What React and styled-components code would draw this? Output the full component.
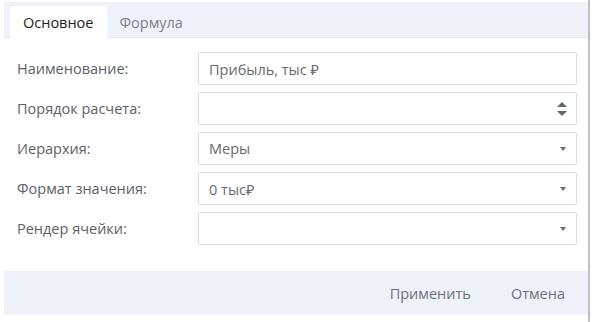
import React from "react";
import styled, { createGlobalStyle } from "styled-components";

const Global = createGlobalStyle`
  html, body { margin: 0; padding: 0; background: #fff; }
  body { font-family: "Open Sans", "Noto Sans", sans-serif; }
  * { box-sizing: border-box; }
`;

const Frame = styled.div`
  width: 590px;
  height: 322px;
  padding: 2px 0 0 4px;
  border-right: 2px solid #bfc0c3;
`;

const Panel = styled.div`
  display: flex;
  flex-direction: column;
  width: 584px;
`;

const TabBar = styled.div`
  display: flex;
  align-items: flex-end;
  height: 36px;
  padding-left: 6px;
  background: #eff2fa;
  border-bottom: 1px solid #e2e5ec;
`;

const Tab = styled.div`
  display: flex;
  align-items: center;
  padding: 0 13px;
  font-size: 14.5px;
  color: ${(p) => (p.$active ? "#222" : "#7a7f8a")};
  background: ${(p) => (p.$active ? "#fff" : "transparent")};
  margin-bottom: -1px;
  height: ${(p) => (p.$active ? "32px" : "31px")};
  border-radius: 2px 2px 0 0;
`;

const Form = styled.div`
  display: flex;
  flex-direction: column;
  gap: 7px;
  padding: 14px 11px 26px 13px;
`;

const Row = styled.div`
  display: grid;
  grid-template-columns: 181px 1fr;
  align-items: center;
`;

const Label = styled.div`
  font-size: 14.5px;
  color: #5d6069;
`;

const Field = styled.div`
  position: relative;
  display: flex;
  align-items: center;
  height: 33px;
  border: 1px solid #dcdde0;
  border-radius: 2px;
  padding: 0 10px;
  font-size: 14.5px;
  color: #666a73;
  background: #fff;
`;

const Caret = styled.div`
  position: absolute;
  right: 10px;
  top: 50%;
  margin-top: -2px;
  width: 0;
  height: 0;
  border-left: 3.5px solid transparent;
  border-right: 3.5px solid transparent;
  border-top: 4px solid #666c7a;
`;

const Spin = styled.div`
  position: absolute;
  right: 9px;
  top: 50%;
  transform: translateY(-50%);
  display: flex;
  flex-direction: column;
  gap: 4px;
`;

const Arrow = styled.div`
  width: 0;
  height: 0;
  border-left: 5px solid transparent;
  border-right: 5px solid transparent;
  ${(p) =>
    p.$up ? "border-bottom: 5px solid #5d6472;" : "border-top: 5px solid #5d6472;"}
`;

const Footer = styled.div`
  display: flex;
  justify-content: flex-end;
  align-items: center;
  gap: 40px;
  height: 44px;
  padding-right: 23px;
  background: #eff2fa;
`;

const Button = styled.div`
  font-size: 14.5px;
  color: #6c717c;
`;

const rows = [
  { label: "Наименование:", value: "Прибыль, тыс \u20BD", kind: "text" },
  { label: "Порядок расчета:", value: "", kind: "number" },
  { label: "Иерархия:", value: "Меры", kind: "select" },
  { label: "Формат значения:", value: "0 тыс\u20BD", kind: "select" },
  { label: "Рендер ячейки:", value: "", kind: "select" },
];

export default function App() {
  return (
    <>
      <Global />
      <Frame>
        <Panel>
          <TabBar>
            <Tab $active>Основное</Tab>
            <Tab>Формула</Tab>
          </TabBar>
          <Form>
            {rows.map((r) => (
              <Row key={r.label}>
                <Label>{r.label}</Label>
                <Field>
                  {r.value}
                  {r.kind === "select" && <Caret />}
                  {r.kind === "number" && (
                    <Spin>
                      <Arrow $up />
                      <Arrow />
                    </Spin>
                  )}
                </Field>
              </Row>
            ))}
          </Form>
          <Footer>
            <Button>Применить</Button>
            <Button>Отмена</Button>
          </Footer>
        </Panel>
      </Frame>
    </>
  );
}
